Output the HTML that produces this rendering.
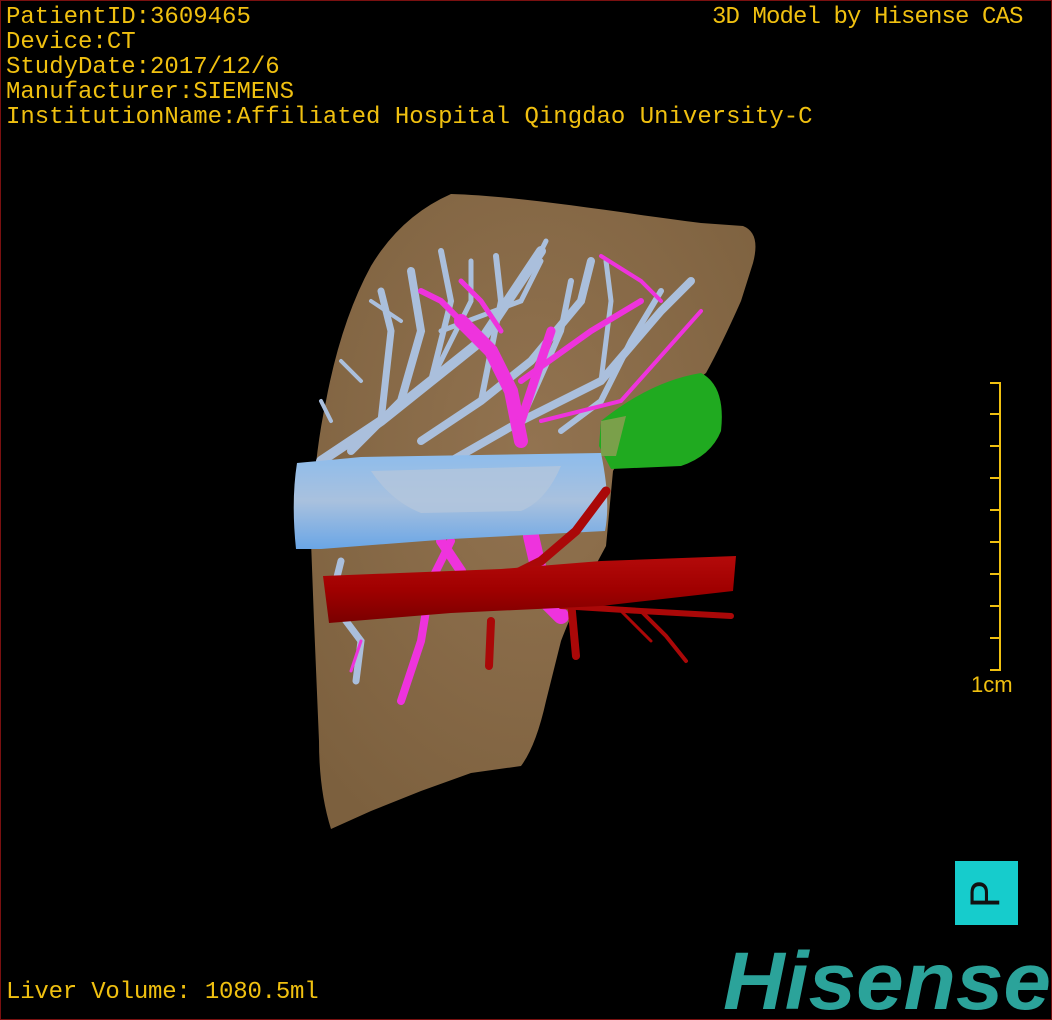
<!DOCTYPE html>
<html><head><meta charset="utf-8"><style>
html,body{margin:0;padding:0;background:#000;}
#w{position:relative;width:1052px;height:1020px;overflow:hidden;background:#000;box-sizing:border-box;border:1px solid #7a1010;}
.t{position:absolute;font-family:"Liberation Mono",monospace;font-size:24px;color:#f0c010;line-height:25px;white-space:pre;}
</style></head><body><div id="w">
<svg width="1052" height="1020" style="position:absolute;left:0;top:0">
<defs>
<radialGradient id="lv" cx="0.5" cy="0.4" r="0.7"><stop offset="0" stop-color="#927350"/><stop offset="1" stop-color="#7c603e"/></radialGradient>
<linearGradient id="tb" x1="0" y1="0" x2="0" y2="1"><stop offset="0" stop-color="#8dbcec"/><stop offset="0.5" stop-color="#a9c1de"/><stop offset="1" stop-color="#6aa6e6"/></linearGradient>
<linearGradient id="rd" x1="0" y1="0" x2="0" y2="1"><stop offset="0" stop-color="#b40a0a"/><stop offset="0.5" stop-color="#a00000"/><stop offset="1" stop-color="#7a0000"/></linearGradient>
</defs>
<path d="M450,193 C520,195 620,212 700,222 L742,225 Q760,232 752,262 L740,300 Q720,345 705,372 L640,420 L612,470 L605,545 Q575,600 560,640 L545,700 Q535,745 520,765 L470,772 L420,790 L370,810 L330,828 Q318,790 318,740 L313,620 L310,540 Q312,460 325,400 Q340,320 370,265 Q400,215 450,193 Z" fill="url(#lv)"/>
<g fill="none" stroke="#aabfdc" stroke-linecap="round">
<path d="M320,460 L380,420 L430,380 L480,340 L540,250" stroke-width="10"/>
<path d="M350,450 L400,400 L420,330 L410,270" stroke-width="8"/>
<path d="M380,420 L390,330 L380,290" stroke-width="7"/>
<path d="M430,380 L450,300 L440,250" stroke-width="6"/>
<path d="M420,440 L480,400 L530,360 L580,300 L590,260" stroke-width="8"/>
<path d="M480,400 L500,300 L495,255" stroke-width="6"/>
<path d="M450,460 L520,420 L600,380 L660,310 L690,280" stroke-width="8"/>
<path d="M520,420 L560,330 L570,280" stroke-width="6"/>
<path d="M560,430 L600,400 L630,340 L660,290" stroke-width="6"/>
<path d="M600,380 L610,300 L605,260" stroke-width="5"/>
<path d="M540,250 L545,240 M430,380 L470,300 L470,260" stroke-width="5"/>
<path d="M360,380 L340,360 M400,320 L370,300 M330,420 L320,400" stroke-width="4"/>
<path d="M340,560 L330,600 L360,640 L355,680" stroke-width="7"/>
<path d="M440,330 L520,300 L540,260" stroke-width="5"/>
</g>
<g fill="none" stroke="#ee33dd" stroke-linecap="round">
<path d="M520,440 L510,390 L490,350 L460,320" stroke-width="14"/>
<path d="M520,420 L540,360 L550,330" stroke-width="9"/>
<path d="M470,330 L440,300 L420,290" stroke-width="6"/>
<path d="M520,380 L590,330 L640,300" stroke-width="6"/>
<path d="M540,420 L620,400 L700,310" stroke-width="4"/>
<path d="M600,255 L640,280 L660,300" stroke-width="4"/>
<path d="M500,330 L480,300 L460,280" stroke-width="5"/>
<path d="M450,540 L430,580 L420,640 L400,700" stroke-width="8"/>
<path d="M440,540 L460,570 L470,600" stroke-width="10"/>
<path d="M530,535 L545,600 L560,615" stroke-width="16"/>
<path d="M360,640 L350,670" stroke-width="3"/>
</g>
<path d="M600,420 Q650,380 700,372 Q725,385 720,430 Q710,455 680,465 L610,468 L598,445 Z" fill="#20aa20"/>
<path d="M600,420 L625,415 L615,455 L600,455 Z" fill="#7aa04a"/>
<path d="M296,462 Q340,458 360,456 L600,452 Q610,500 604,530 L450,538 L320,548 L295,548 Q290,500 296,462 Z" fill="url(#tb)"/>
<path d="M370,470 L560,465 Q545,500 520,510 L420,512 Q390,500 370,470 Z" fill="#b3c5dc" opacity="0.8"/>
<g stroke="#aa0808" fill="none" stroke-linecap="round">
<path d="M500,580 L540,560 L575,530 L605,490" stroke-width="9"/>
<path d="M570,600 L575,655" stroke-width="8"/>
<path d="M490,620 L488,665" stroke-width="8"/>
<path d="M560,605 L640,610 L730,615" stroke-width="6"/>
<path d="M640,610 L665,635 L685,660" stroke-width="4"/>
<path d="M620,610 L650,640" stroke-width="3"/>
</g>
<path d="M322,575 L500,568 L600,560 L735,555 L732,590 L600,605 L450,612 L328,622 Z" fill="url(#rd)"/>
<g stroke="#f0c010" stroke-width="2">
<line x1="999" y1="381" x2="999" y2="670"/>
<line x1="989" y1="382" x2="999" y2="382"/><line x1="989" y1="413" x2="999" y2="413"/><line x1="989" y1="445" x2="999" y2="445"/><line x1="989" y1="477" x2="999" y2="477"/><line x1="989" y1="509" x2="999" y2="509"/><line x1="989" y1="541" x2="999" y2="541"/><line x1="989" y1="573" x2="999" y2="573"/><line x1="989" y1="605" x2="999" y2="605"/><line x1="989" y1="637" x2="999" y2="637"/><line x1="989" y1="669" x2="999" y2="669"/>
</g>
<text x="970" y="691" font-family="Liberation Sans,sans-serif" font-size="22" fill="#f0c010">1cm</text>
<rect x="954" y="860" width="63" height="64" fill="#16cccc"/>
<text x="0" y="0" transform="translate(998,893) rotate(-90)" text-anchor="middle" font-family="Liberation Sans,sans-serif" font-size="42" fill="#111">P</text>
<text x="722" y="1008" font-family="Liberation Sans,sans-serif" font-weight="bold" font-style="italic" font-size="82" fill="#2ba39a" textLength="328" lengthAdjust="spacingAndGlyphs">Hisense</text>
</svg>
<div class="t" style="left:5px;top:4px">PatientID:3609465
Device:CT
StudyDate:2017/12/6
Manufacturer:SIEMENS
InstitutionName:Affiliated Hospital Qingdao University-C</div>
<div class="t" style="left:711px;top:4px;letter-spacing:-0.9px">3D Model by Hisense CAS</div>
<div class="t" style="left:5px;top:979px;letter-spacing:-0.2px">Liver Volume: 1080.5ml</div>
</div></body></html>
